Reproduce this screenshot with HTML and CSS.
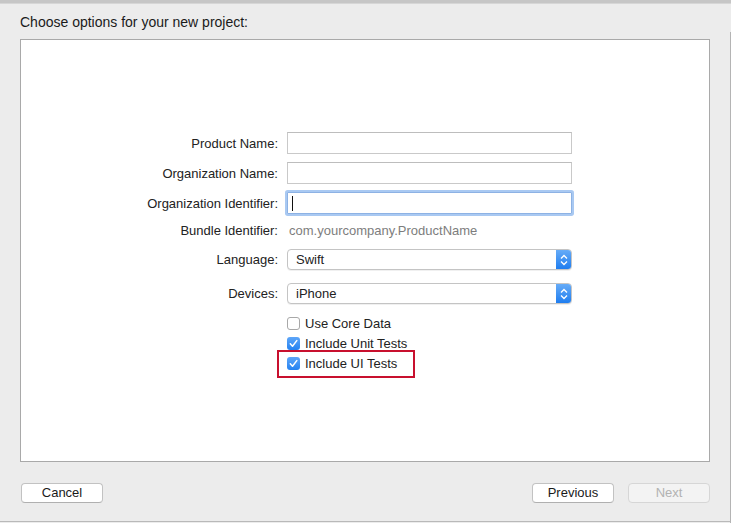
FILE: index.html
```html
<!DOCTYPE html>
<html>
<head>
<meta charset="utf-8">
<link rel="stylesheet" href="styles.css">
</head>
<body>
<div class="window">
  <div class="topbar"></div>
  <div class="title">Choose options for your new project:</div>
  <div class="panel">
    <div class="form">
      <div class="row r-product">
        <div class="label">Product Name:</div>
        <div class="field"></div>
      </div>
      <div class="row r-org">
        <div class="label">Organization Name:</div>
        <div class="field"></div>
      </div>
      <div class="row r-orgid">
        <div class="label">Organization Identifier:</div>
        <div class="field focused"><span class="caret"></span></div>
      </div>
      <div class="row r-bundle">
        <div class="label">Bundle Identifier:</div>
        <div class="value">com.yourcompany.ProductName</div>
      </div>
      <div class="row r-lang">
        <div class="label">Language:</div>
        <div class="popup"><span class="popup-text">Swift</span>
          <span class="stepper"><svg width="16" height="20" viewBox="0 0 16 20"><path d="M5 8.5 L8 5.5 L11 8.5" fill="none" stroke="#fff" stroke-width="1.3"/><path d="M5 11.5 L8 14.5 L11 11.5" fill="none" stroke="#fff" stroke-width="1.3"/></svg></span>
        </div>
      </div>
      <div class="row r-dev">
        <div class="label">Devices:</div>
        <div class="popup"><span class="popup-text">iPhone</span>
          <span class="stepper"><svg width="16" height="20" viewBox="0 0 16 20"><path d="M5 8.5 L8 5.5 L11 8.5" fill="none" stroke="#fff" stroke-width="1.3"/><path d="M5 11.5 L8 14.5 L11 11.5" fill="none" stroke="#fff" stroke-width="1.3"/></svg></span>
        </div>
      </div>
      <div class="row r-check first">
        <div class="label"></div>
        <div class="check"><span class="box"></span>Use Core Data</div>
      </div>
      <div class="row r-check">
        <div class="label"></div>
        <div class="check"><span class="box on"><svg width="13" height="13" viewBox="0 0 13 13"><path d="M3.3 6.8 L5.5 9.2 L9.8 3.6" fill="none" stroke="#fff" stroke-width="1.5" stroke-linecap="round" stroke-linejoin="round"/></svg></span>Include Unit Tests</div>
      </div>
      <div class="row r-check">
        <div class="label"></div>
        <div class="check highlighted"><span class="box on"><svg width="13" height="13" viewBox="0 0 13 13"><path d="M3.3 6.8 L5.5 9.2 L9.8 3.6" fill="none" stroke="#fff" stroke-width="1.5" stroke-linecap="round" stroke-linejoin="round"/></svg></span>Include UI Tests<span class="mark"></span></div>
      </div>
    </div>
  </div>
  <div class="buttons">
    <div class="btn">Cancel</div>
    <div class="spacer"></div>
    <div class="btn">Previous</div>
    <div class="btn disabled">Next</div>
  </div>
  <div class="bottomline"></div>
  <div class="rightline"></div>
</div>
</body>
</html>
```

FILE: styles.css
```css
html, body {
  margin: 0;
  padding: 0;
  background: #ececec;
  font-family: "Liberation Sans", Arial, sans-serif;
  font-size: 13px;
  color: #222;
}
.window {
  width: 731px;
  height: 523px;
  position: relative;
  display: flex;
  flex-direction: column;
}
.topbar {
  height: 3px;
  background: #c6c6c6;
  border-bottom: 1px solid #d6d6d6;
}
.title {
  padding: 10px 0 0 20px;
  height: 25px;
  line-height: 17px;
  font-size: 14px;
  color: #1a1a1a;
}
.panel {
  margin-left: 20px;
  width: 690px;
  height: 423px;
  box-sizing: border-box;
  background: #fff;
  border: 1px solid #a9a9a9;
  padding-top: 92px;
}
.form {
  display: flex;
  flex-direction: column;
}
.row {
  display: grid;
  grid-template-columns: 257px 285px;
  column-gap: 9px;
  align-items: center;
}
.label {
  text-align: right;
  white-space: nowrap;
}
.r-product { height: 22px; }
.r-org { height: 22px; margin-top: 8px; }
.r-orgid { height: 22px; margin-top: 8px; }
.r-bundle { height: 20px; margin-top: 6px; }
.r-lang { height: 21px; margin-top: 9px; }
.r-dev { height: 21px; margin-top: 13px; }
.r-check { height: 20px; }
.r-check.first { margin-top: 9px; }

.field {
  height: 22px;
  box-sizing: border-box;
  border: 1px solid #c9c9c9;
  border-top-color: #bdbdbd;
  background: #fff;
  position: relative;
}
.field.focused {
  border: 1px solid #8db2e4;
  box-shadow: 0 0 0 2px #a9c9f2;
  border-radius: 1px;
}
.caret {
  position: absolute;
  left: 4px;
  top: 3px;
  width: 1px;
  height: 15px;
  background: #111;
}
.value {
  color: #7d7d7d;
  padding-left: 2px;
}
.popup {
  height: 21px;
  box-sizing: border-box;
  border: 1px solid #c4c4c4;
  border-radius: 4px;
  background: #fff;
  display: flex;
  align-items: center;
  overflow: hidden;
  box-shadow: 0 1px 0 rgba(0,0,0,0.06);
}
.popup-text {
  flex: 1;
  padding-left: 8px;
}
.stepper {
  width: 16px;
  height: 21px;
  margin-right: -1px;
  background: linear-gradient(#6aaef8, #1b7bef);
  display: flex;
  align-items: center;
  justify-content: center;
}
.check {
  display: flex;
  align-items: center;
  position: relative;
}
.box {
  width: 13px;
  height: 13px;
  box-sizing: border-box;
  border: 1px solid #a8a8a8;
  border-radius: 3px;
  background: #fff;
  margin-right: 5px;
  display: flex;
}
.box.on {
  border: none;
  background: linear-gradient(#5ea6f8, #2582f1);
}
.mark {
  position: absolute;
  left: -10px;
  top: -6px;
  width: 138px;
  height: 28px;
  box-sizing: border-box;
  border: 2px solid #c8102e;
}
.buttons {
  display: flex;
  padding: 21px 21px 0 21px;
  gap: 14px;
}
.spacer { flex: 1; }
.btn {
  width: 82px;
  height: 20px;
  box-sizing: border-box;
  border: 1px solid #c2c2c2;
  border-bottom-color: #b0b0b0;
  border-radius: 4px;
  background: #fff;
  text-align: center;
  line-height: 18px;
  color: #1a1a1a;
}
.btn:first-child { width: 82px; }
.btn.disabled {
  color: #b2b2b2;
  background: #f3f3f3;
  border-color: #d6d6d6;
}
.bottomline {
  position: absolute;
  left: 0;
  right: 0;
  bottom: 1px;
  height: 1px;
  background: #b9b9b9;
}
.rightline {
  position: absolute;
  right: 0;
  top: 32px;
  bottom: 0;
  width: 1px;
  background: #b4b4b4;
}
```
